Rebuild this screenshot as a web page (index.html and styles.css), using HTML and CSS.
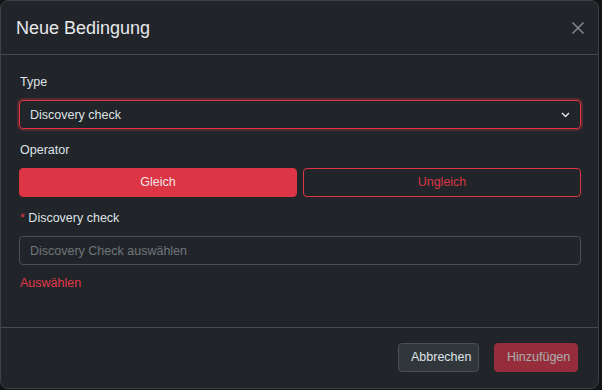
FILE: index.html
```html
<!DOCTYPE html>
<html lang="de">
<head>
<meta charset="utf-8">
<title>Neue Bedingung</title>
<link rel="stylesheet" href="styles.css">
</head>
<body>
<div class="modal">
  <div class="modal-header">
    <h5 class="modal-title">Neue Bedingung</h5>
    <button class="btn-close" aria-label="Schließen">
      <svg width="12" height="12" viewBox="0 0 12 12"><path d="M0.5 0.5 L11.5 11.5 M11.5 0.5 L0.5 11.5" stroke="#8b8f94" stroke-width="1.4" fill="none"/></svg>
    </button>
  </div>
  <div class="modal-body">
    <label class="form-label">Type</label>
    <div class="select focus">
      <span>Discovery check</span>
      <svg class="chev" width="9" height="6" viewBox="0 0 9 6"><path d="M1 1 L4.5 4.5 L8 1" stroke="#dee2e6" stroke-width="1.5" fill="none"/></svg>
    </div>
    <label class="form-label">Operator</label>
    <div class="btn-group">
      <button class="btn btn-danger">Gleich</button>
      <button class="btn btn-outline-danger">Ungleich</button>
    </div>
    <label class="form-label"><span class="req">*</span> Discovery check</label>
    <div class="input"><span class="placeholder">Discovery Check auswählen</span></div>
    <a class="link">Auswählen</a>
  </div>
  <div class="modal-footer">
    <button class="btn btn-secondary">Abbrechen</button>
    <button class="btn btn-submit" disabled>Hinzufügen</button>
  </div>
</div>
</body>
</html>
```

FILE: styles.css
```css
* { box-sizing: border-box; }
html, body {
  margin: 0;
  padding: 0;
  background: #101214;
  font-family: "Liberation Sans", Arial, sans-serif;
  color: #dee2e6;
}
.modal {
  width: 599px;
  height: 389px;
  background: #212529;
  border: 1px solid #3c4146;
  border-radius: 8px;
  display: flex;
  flex-direction: column;
  overflow: hidden;
}
.modal-header {
  height: 54px;
  border-bottom: 1px solid #464b51;
  display: flex;
  align-items: center;
  justify-content: space-between;
  padding: 0 14px 0 15px;
  flex: none;
}
.modal-title {
  margin: 0;
  font-size: 18px;
  font-weight: 400;
  color: #e6e8eb;
  line-height: 22px;
  padding-top: 1px;
}
.btn-close {
  background: none;
  border: 0;
  padding: 0;
  width: 12px;
  height: 12px;
  display: flex;
}
.modal-body {
  flex: 1;
  padding: 18px 17px 0 18px;
  display: flex;
  flex-direction: column;
}
.form-label {
  font-size: 12.5px;
  line-height: 18px;
  height: 18px;
  margin: 0 0 9px 1px;
  color: #dee2e6;
}
.req { color: #dc3545; }
.select, .input {
  height: 29px;
  border-radius: 4px;
  display: flex;
  align-items: center;
  padding: 0 10px;
  font-size: 12.5px;
  margin-bottom: 12px;
}
.select {
  border: 1px solid #e03444;
  box-shadow: 0 0 0 2px rgba(220, 53, 69, 0.28);
  justify-content: space-between;
}
.chev { margin-top: 1px; }
.input {
  border: 1px solid #4a4f55;
  margin-bottom: 9px;
}
.placeholder { color: #6f757b; }
.btn-group {
  display: flex;
  gap: 6px;
  margin-bottom: 12px;
}
.btn {
  font-family: "Liberation Sans", Arial, sans-serif;
  font-size: 12.5px;
  height: 29px;
  border-radius: 4px;
  padding: 0 12px;
  line-height: 1;
}
.btn-group .btn { flex: 1; }
.btn-danger {
  background: #dc3545;
  border: 1px solid #dc3545;
  color: #f1e4e6;
}
.btn-outline-danger {
  background: transparent;
  border: 1px solid #dc3545;
  color: #dc3545;
}
.link {
  color: #e0384a;
  font-size: 12.5px;
  line-height: 18px;
  margin-left: 1px;
}
.modal-footer {
  height: 61px;
  flex: none;
  border-top: 1px solid #464b51;
  display: flex;
  justify-content: flex-end;
  align-items: flex-start;
  gap: 15px;
  padding: 15px 20px 0 0;
}
.btn-secondary {
  width: 81px;
  background: #31363b;
  border: 1px solid #4a4f55;
  color: #dee2e6;
}
.btn-submit {
  width: 84px;
  background: #dc3545;
  border: 1px solid #dc3545;
  color: #ffffff;
  opacity: 0.62;
}
```
